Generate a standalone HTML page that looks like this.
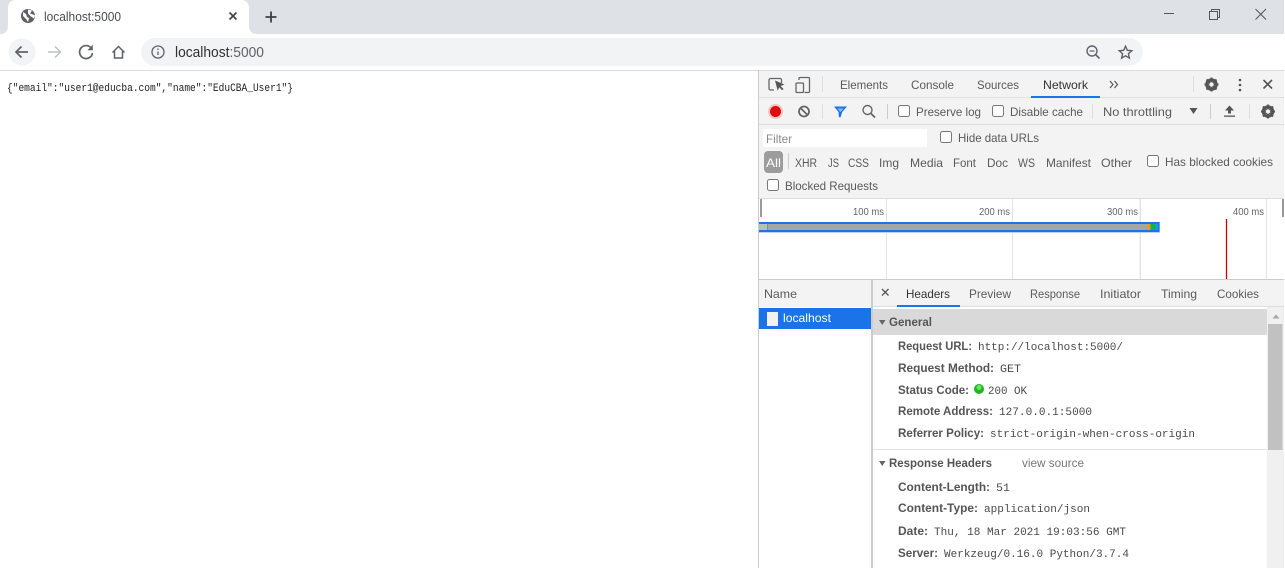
<!DOCTYPE html>
<html><head><meta charset="utf-8"><style>
html,body{margin:0;padding:0;background:#fff;width:1285px;height:570px;overflow:hidden}
svg{display:block;filter:blur(.3px)}
text{font-family:"Liberation Sans",sans-serif;font-size:12px;fill:#5a5a5a}
.m{font-family:"Liberation Mono",monospace;font-size:11px;fill:#4a4a4a}
.b{font-weight:bold;fill:#555;font-size:12px}
.cb{fill:#fff;stroke:#777;stroke-width:1}
</style></head><body>
<svg width="1285" height="570" viewBox="0 0 1285 570" xmlns="http://www.w3.org/2000/svg">
<rect width="1284" height="34" fill="#dee1e6"/>
<path d="M0 34C5 34 8 31 8 26V8C8 3 11 0 16 0H241C246 0 249 3 249 8V26C249 31 252 34 257 34Z" fill="#fff"/>
<circle cx="28" cy="16" r="7" fill="#5f6368"/>
<path d="M23 12l3 2 1 3 2 1-1 4-2-3-3-3zM28 9.500l4 1-2 3 3 1 2 1-1 3-3-2-3-3z" fill="#fff"/>
<text x="44" y="21" textLength="77" lengthAdjust="spacingAndGlyphs" style="font-size:12.500px;fill:#4a4d51">localhost:5000</text>
<path d="M229.500 12.500l7 7M236.500 12.500l-7 7" stroke="#3c4043" stroke-width="1.600"/>
<path d="M271 11.500v11M265.500 17h11" stroke="#3c4043" stroke-width="1.800"/>
<path d="M1164 13.500h10" stroke="#555" stroke-width="1"/>
<path d="M1209.500 11.500h8v8h-8zM1211.500 11.500v-2h8v8h-2" fill="none" stroke="#555" stroke-width="1"/>
<path d="M1255.500 9l10.500 10.500M1266 9l-10.500 10.500" stroke="#555" stroke-width="1"/>

<rect y="70" width="1284" height="1" fill="#dadce0"/>
<circle cx="22" cy="52" r="13.500" fill="#f1f3f4"/>
<path d="M28 52H16.500M21.500 46.500L16 52l5.500 5.500" fill="none" stroke="#5f6368" stroke-width="1.700"/>
<path d="M48 52h12M55 46.500l5.500 5.500-5.500 5.500" fill="none" stroke="#bdc1c6" stroke-width="1.500"/>
<path d="M91.500 48.500A6.500 6.500 0 1 0 92.500 53" fill="none" stroke="#5f6368" stroke-width="1.700"/>
<path d="M92.800 44.800v5.400h-5.400z" fill="#5f6368"/>
<path d="M112.500 52.500L118.500 46.500l6 6M114.500 51v7h8v-7" fill="none" stroke="#5f6368" stroke-width="1.500"/>
<rect x="141" y="38" width="1002" height="28" rx="14" fill="#f1f3f4"/>
<circle cx="158" cy="52" r="6" fill="none" stroke="#5f6368" stroke-width="1.300"/>
<path d="M158 51.500v3.500M158 48.500v1.500" stroke="#5f6368" stroke-width="1.300"/>
<text x="175" y="57" textLength="89" lengthAdjust="spacingAndGlyphs" style="font-size:14.500px;fill:#303134">localhost<tspan fill="#5f6368">:5000</tspan></text>
<circle cx="1092" cy="51" r="5" fill="none" stroke="#5f6368" stroke-width="1.400"/>
<path d="M1096 55l3.500 3.500" stroke="#5f6368" stroke-width="1.600"/><path d="M1089.500 51h5" stroke="#5f6368" stroke-width="1.200"/>
<path d="M1125.500 46.200l1.800 4.100 4.500.4-3.400 3 1 4.400-3.900-2.300-3.900 2.300 1-4.400-3.400-3 4.500-.4z" fill="none" stroke="#5f6368" stroke-width="1.400"/>

<text x="7" y="91" class="m" textLength="286" lengthAdjust="spacingAndGlyphs" style="font-size:11px;fill:#222">{"email":"user1@educba.com","name":"EduCBA_User1"}</text>

<rect x="758" y="71" width="526" height="497" fill="#f3f3f3"/>
<rect x="758" y="70" width="1" height="498" fill="#ccc"/>
<rect x="759" y="97" width="525" height="1" fill="#e0e0e0"/>
<rect x="759" y="124" width="525" height="1" fill="#dcdcdc"/>
<rect x="759" y="198" width="525" height="1" fill="#ddd"/>
<g fill="none" stroke="#666" stroke-width="1.300">
<path d="M774 90h-3.500a1.500 1.500 0 0 1-1.500-1.500V80a1.500 1.500 0 0 1 1.500-1.500H780a1.500 1.500 0 0 1 1.500 1.500v3"/>
<rect x="796" y="83" width="7.500" height="9.500" rx="1"/><path d="M799 80v-1.500a1 1 0 0 1 1-1h8.500a1 1 0 0 1 1 1V91.500a1 1 0 0 1-1 1h-4"/>
</g>
<path d="M775 80.500l9.500 4-3.800 1.500 2.800 3-1.400 1.300-2.800-3-1.600 3.500z" fill="#555"/>
<rect x="822" y="76" width="1" height="16" fill="#ddd"/>
<text x="840" y="89" textLength="48" lengthAdjust="spacingAndGlyphs">Elements</text>
<text x="911" y="89" textLength="43" lengthAdjust="spacingAndGlyphs">Console</text>
<text x="977" y="89" textLength="42" lengthAdjust="spacingAndGlyphs">Sources</text>
<text x="1043" y="89" textLength="45" lengthAdjust="spacingAndGlyphs" style="fill:#333">Network</text>
<rect x="1031" y="96" width="69" height="2" fill="#1a73e8"/>
<path d="M1110 81l3 3.500-3 3.500M1114.500 81l3 3.500-3 3.500" fill="none" stroke="#555" stroke-width="1.200"/>
<rect x="1193" y="76" width="1" height="16" fill="#ddd"/>
<g id="g1"><circle cx="1211.500" cy="84.500" r="4.800" fill="none" stroke="#555" stroke-width="3"/><path d="M1211.500 77.500v14M1204.500 84.500h14M1206.500 79.500l10 10M1216.500 79.500l-10 10" stroke="#555" stroke-width="2"/><circle cx="1211.500" cy="84.500" r="2.200" fill="#f3f3f3"/></g>
<circle cx="1240" cy="80" r="1.300" fill="#555"/><circle cx="1240" cy="85" r="1.300" fill="#555"/><circle cx="1240" cy="90" r="1.300" fill="#555"/>
<path d="M1263.500 80l8.500 8.500M1272 80l-8.500 8.500" stroke="#555" stroke-width="1.600"/>

<circle cx="775.500" cy="111.500" r="7.500" fill="#f4c4c0"/><circle cx="775.500" cy="111.500" r="5.500" fill="#e00b0b"/>
<circle cx="804" cy="111.500" r="5" fill="none" stroke="#666" stroke-width="1.800"/><path d="M800.500 108l7 7" stroke="#666" stroke-width="1.800"/>
<rect x="822" y="104" width="1" height="15" fill="#ddd"/>
<path d="M834 106.500h13l-4.800 5.500-1.700 5.500-1.700-.5-.2-5z" fill="#1a73e8" /><path d="M837.500 108.500h6l-3 3.600z" fill="#8ab9f5"/>
<circle cx="867.500" cy="110" r="4.500" fill="none" stroke="#666" stroke-width="1.400"/><path d="M871 113.500l4 4" stroke="#666" stroke-width="1.800"/>
<rect x="887" y="104" width="1" height="15" fill="#ccc"/>
<rect class="cb" x="898.500" y="105.500" width="11" height="11" rx="2"/>
<text x="916" y="116" textLength="65" lengthAdjust="spacingAndGlyphs">Preserve log</text>
<rect class="cb" x="992.500" y="105.500" width="11" height="11" rx="2"/>
<text x="1010" y="116" textLength="73" lengthAdjust="spacingAndGlyphs">Disable cache</text>
<rect x="1092" y="104" width="1" height="15" fill="#ddd"/>
<text x="1103" y="116" textLength="69" lengthAdjust="spacingAndGlyphs">No throttling</text>
<path d="M1189.500 108h8l-4 6z" fill="#555"/>
<rect x="1210" y="104" width="1" height="15" fill="#ccc"/>
<path d="M1229.500 105.500l4.500 5h-3v3h-3v-3h-3z" fill="#555"/><rect x="1224" y="115.500" width="11" height="1.300" fill="#555"/>
<rect x="1249" y="104" width="1" height="15" fill="#ddd"/>
<use href="#g1" x="56.500" y="27"/>

<rect x="763" y="129" width="164" height="18" fill="#fff"/>
<text x="766" y="143" textLength="26" lengthAdjust="spacingAndGlyphs" style="fill:#8a8a8a">Filter</text>
<rect class="cb" x="940.500" y="131.500" width="11" height="11" rx="2"/>
<text x="958" y="142" textLength="81" lengthAdjust="spacingAndGlyphs">Hide data URLs</text>

<rect x="764" y="151" width="19" height="22" rx="4" fill="#9c9c9c"/>
<text x="766" y="167" textLength="15" lengthAdjust="spacingAndGlyphs" style="fill:#fff">All</text>
<rect x="788" y="153" width="1" height="16" fill="#ccc"/>
<text x="795" y="167" textLength="22" lengthAdjust="spacingAndGlyphs" style="font-size:11.500px">XHR</text>
<text x="828" y="167" textLength="11" lengthAdjust="spacingAndGlyphs">JS</text>
<text x="848" y="167" textLength="21" lengthAdjust="spacingAndGlyphs">CSS</text>
<text x="879" y="167" textLength="20" lengthAdjust="spacingAndGlyphs">Img</text>
<text x="910" y="167" textLength="33" lengthAdjust="spacingAndGlyphs">Media</text>
<text x="953" y="167" textLength="23" lengthAdjust="spacingAndGlyphs">Font</text>
<text x="987" y="167" textLength="21" lengthAdjust="spacingAndGlyphs">Doc</text>
<text x="1018" y="167" textLength="17" lengthAdjust="spacingAndGlyphs">WS</text>
<text x="1046" y="167" textLength="45" lengthAdjust="spacingAndGlyphs">Manifest</text>
<text x="1101" y="167" textLength="31" lengthAdjust="spacingAndGlyphs">Other</text>
<rect class="cb" x="1147.500" y="155.500" width="11" height="11" rx="2"/>
<text x="1165" y="166" textLength="108" lengthAdjust="spacingAndGlyphs">Has blocked cookies</text>
<rect class="cb" x="767.500" y="179.500" width="11" height="11" rx="2"/>
<text x="785" y="190" textLength="93" lengthAdjust="spacingAndGlyphs">Blocked Requests</text>

<rect x="759" y="199" width="525" height="80" fill="#fff"/>
<rect x="759" y="279" width="525" height="1" fill="#ccc"/>
<g fill="#e4e4e4"><rect x="886" y="199" width="1" height="80"/><rect x="1012" y="199" width="1" height="80"/><rect x="1139.500" y="199" width="1.500" height="80"/><rect x="1266" y="199" width="1" height="80"/></g>
<rect x="760" y="199" width="2" height="18" fill="#999"/><rect x="1282" y="199" width="2" height="18" fill="#999"/>
<g><text x="853" y="215" textLength="31" lengthAdjust="spacingAndGlyphs" style="font-size:10px;fill:#666">100 ms</text>
<text x="979" y="215" textLength="31" lengthAdjust="spacingAndGlyphs" style="font-size:10px;fill:#666">200 ms</text>
<text x="1107" y="215" textLength="31" lengthAdjust="spacingAndGlyphs" style="font-size:10px;fill:#666">300 ms</text>
<text x="1233" y="215" textLength="31" lengthAdjust="spacingAndGlyphs" style="font-size:10px;fill:#666">400 ms</text></g>
<rect x="759" y="222" width="401" height="11" fill="#b8d4f8"/>
<rect x="759" y="222" width="400.500" height="10" fill="#1a73e8"/>
<rect x="759" y="224" width="399" height="6" fill="#a6a6a6"/>
<rect x="759" y="224" width="8" height="6" fill="#bcbcbc"/><rect x="767" y="224" width="1" height="6" fill="#5a9ea0"/>
<rect x="1147.500" y="224" width="3" height="6" fill="#f09a1a"/><rect x="1150.500" y="224" width="5.500" height="6" fill="#0fb060"/><rect x="1156" y="224" width="2" height="6" fill="#1a9ae8"/>
<rect x="1225.500" y="219" width="2" height="60" fill="#e8b0b0"/><rect x="1226" y="219" width="1" height="60" fill="#c00"/>

<rect x="759" y="280" width="112" height="27" fill="#f3f3f3"/>
<rect x="759" y="307" width="112" height="261" fill="#fff"/>
<rect x="871" y="280" width="2" height="288" fill="#ccc"/>
<text x="764" y="298" textLength="33" lengthAdjust="spacingAndGlyphs">Name</text>
<rect x="759" y="308" width="112" height="21" fill="#1a73e8"/>
<rect x="767" y="312" width="11" height="14" fill="#f2f2f2"/>
<text x="783" y="322" textLength="48" lengthAdjust="spacingAndGlyphs" style="fill:#fff">localhost</text>
<rect x="873" y="307" width="411" height="261" fill="#fff"/>
<rect x="873" y="306" width="411" height="1" fill="#ddd"/>
<path d="M882 289l6.500 6.500M888.500 289l-6.500 6.500" stroke="#555" stroke-width="1.300"/>
<text x="906" y="298" textLength="44" lengthAdjust="spacingAndGlyphs" style="fill:#333">Headers</text>
<rect x="897" y="305" width="63" height="2" fill="#1a73e8"/>
<text x="969" y="298" textLength="42" lengthAdjust="spacingAndGlyphs">Preview</text>
<text x="1030" y="298" textLength="50" lengthAdjust="spacingAndGlyphs">Response</text>
<text x="1100" y="298" textLength="41" lengthAdjust="spacingAndGlyphs">Initiator</text>
<text x="1161" y="298" textLength="36" lengthAdjust="spacingAndGlyphs">Timing</text>
<text x="1217" y="298" textLength="42" lengthAdjust="spacingAndGlyphs">Cookies</text>

<rect x="873" y="309" width="394" height="26" fill="#d9d9d9"/>
<path d="M879 320h6.500l-3.250 5z" fill="#666"/>
<text x="889" y="326" class="b" textLength="43" lengthAdjust="spacingAndGlyphs">General</text>
<rect x="1267" y="307" width="17" height="261" fill="#f0f0f0"/>
<rect x="1268" y="324" width="14.500" height="126" fill="#c1c1c1"/>
<path d="M1272.500 318.500h7l-3.500-4z" fill="#a8a8a8"/>

<text x="898" y="350" class="b" textLength="74" lengthAdjust="spacingAndGlyphs">Request URL:</text>
<text x="978" y="350" class="m" textLength="145" lengthAdjust="spacingAndGlyphs">http://localhost:5000/</text>
<text x="898" y="372" class="b" textLength="96" lengthAdjust="spacingAndGlyphs">Request Method:</text>
<text x="1000" y="372" class="m" textLength="21" lengthAdjust="spacingAndGlyphs">GET</text>
<text x="898" y="394" class="b" textLength="71" lengthAdjust="spacingAndGlyphs">Status Code:</text>
<circle cx="979" cy="389" r="5" fill="#1fb51f"/><circle cx="979" cy="387.500" r="2.500" fill="#6fe06f"/>
<text x="988" y="394" class="m" textLength="39" lengthAdjust="spacingAndGlyphs">200 OK</text>
<text x="898" y="415" class="b" textLength="95" lengthAdjust="spacingAndGlyphs">Remote Address:</text>
<text x="999" y="415" class="m" textLength="93" lengthAdjust="spacingAndGlyphs">127.0.0.1:5000</text>
<text x="898" y="437" class="b" textLength="86" lengthAdjust="spacingAndGlyphs">Referrer Policy:</text>
<text x="990" y="437" class="m" textLength="205" lengthAdjust="spacingAndGlyphs">strict-origin-when-cross-origin</text>
<rect x="873" y="449" width="394" height="1" fill="#e4e4e4"/>
<path d="M879 461h6.500l-3.250 5z" fill="#666"/>
<text x="889" y="467" class="b" textLength="103" lengthAdjust="spacingAndGlyphs">Response Headers</text>
<text x="1022" y="467" textLength="62" lengthAdjust="spacingAndGlyphs" style="fill:#777">view source</text>
<text x="898" y="491" class="b" textLength="92" lengthAdjust="spacingAndGlyphs">Content-Length:</text>
<text x="996" y="491" class="m" textLength="14" lengthAdjust="spacingAndGlyphs">51</text>
<text x="898" y="512" class="b" textLength="80" lengthAdjust="spacingAndGlyphs">Content-Type:</text>
<text x="984" y="512" class="m" textLength="106" lengthAdjust="spacingAndGlyphs">application/json</text>
<text x="898" y="535" class="b" textLength="30" lengthAdjust="spacingAndGlyphs">Date:</text>
<text x="934" y="535" class="m" textLength="192" lengthAdjust="spacingAndGlyphs">Thu, 18 Mar 2021 19:03:56 GMT</text>
<text x="898" y="557" class="b" textLength="40" lengthAdjust="spacingAndGlyphs">Server:</text>
<text x="944" y="557" class="m" textLength="185" lengthAdjust="spacingAndGlyphs">Werkzeug/0.16.0 Python/3.7.4</text>
</svg>
</body></html>
